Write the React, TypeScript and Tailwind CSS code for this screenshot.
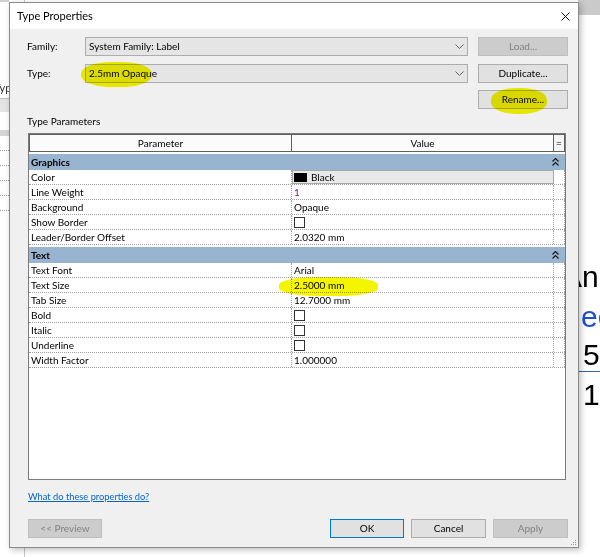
import React from 'react';

const font = { fontFamily: '"Segoe UI", Lato, "Liberation Sans", sans-serif' };

function Chevron() {
  return (
    <svg width="9" height="5" viewBox="0 0 9 5" className="text-[#606060]">
      <path d="M0.5 0.5 L4.5 4.5 L8.5 0.5" fill="none" stroke="currentColor" strokeWidth="1" />
    </svg>
  );
}

function Collapse() {
  return (
    <svg width="7" height="8" viewBox="0 0 7 8">
      <path d="M0.5 3.5 L3.5 0.5 L6.5 3.5 M0.5 7.5 L3.5 4.5 L6.5 7.5" fill="none" stroke="#1a1a1a" strokeWidth="1.2" />
    </svg>
  );
}

function Combo({ text }: { text: string }) {
  return (
    <div className="w-[383px] h-full bg-[#e5e5e5] border border-[#adadad] flex items-center justify-between pl-[3px] pr-[3px]">
      <span className="text-black">{text}</span>
      <Chevron />
    </div>
  );
}

function Btn({ label, disabled, primary, w }: { label: string; disabled?: boolean; primary?: boolean; w: string }) {
  return (
    <div
      className={`${w} h-full flex items-center justify-center border ${
        disabled
          ? 'bg-[#cccccc] border-[#bfbfbf] text-[#838383]'
          : primary
          ? 'bg-[#e1e1e1] border-[#0078d7] text-black'
          : 'bg-[#e1e1e1] border-[#adadad] text-black'
      }`}
    >
      {label}
    </div>
  );
}

function Check() {
  return <div className="w-[11px] h-[11px] border border-[#333333] bg-white" />;
}

type Row = { name: string; value: React.ReactNode; kind?: 'color' };

function DataRow({ row }: { row: Row }) {
  return (
    <div className="flex h-[15px] border-b border-dotted border-[#a0a0a0]">
      <div className="w-[263px] pl-[2px] border-r border-dotted border-[#a0a0a0] flex items-center">{row.name}</div>
      {row.kind === 'color' ? (
        <div className="w-[262px] bg-[#e9e9e9] border border-[#a8a8a8] flex items-center gap-[4px] pl-[1px]">
          <div className="w-[13px] h-[9px] bg-black" />
          <span>{row.value}</span>
        </div>
      ) : (
        <div className="w-[262px] pl-[2px] border-r border-dotted border-[#a0a0a0] flex items-center">{row.value}</div>
      )}
      <div className="w-[11px] border-r border-dotted border-[#a0a0a0]" />
    </div>
  );
}

function Group({ title, rows }: { title: string; rows: Row[] }) {
  return (
    <div className="mt-[2px]">
      <div className="h-[16px] bg-[#99b4d1] flex items-center justify-between pl-[2px] pr-[6px] font-bold">
        <span>{title}</span>
        <Collapse />
      </div>
      {rows.map((r) => (
        <DataRow key={r.name} row={r} />
      ))}
    </div>
  );
}

const graphics: Row[] = [
  { name: 'Color', value: 'Black', kind: 'color' },
  { name: 'Line Weight', value: <span className="text-[#6b1d6b]">1</span> },
  { name: 'Background', value: 'Opaque' },
  { name: 'Show Border', value: <Check /> },
  { name: 'Leader/Border Offset', value: '2.0320 mm' },
];

const text: Row[] = [
  { name: 'Text Font', value: 'Arial' },
  { name: 'Text Size', value: '2.5000 mm' },
  { name: 'Tab Size', value: '12.7000 mm' },
  { name: 'Bold', value: <Check /> },
  { name: 'Italic', value: <Check /> },
  { name: 'Underline', value: <Check /> },
  { name: 'Width Factor', value: '1.000000' },
];

export default function App() {
  return (
    <div className="relative w-[600px] h-[557px] overflow-hidden bg-white text-[10px] text-black" style={font}>
      {/* window behind the dialog */}
      <div className="flex h-full">
        <div className="w-[9px] flex flex-col overflow-hidden">
          <div className="h-[2px] bg-[#d0d0d0]" />
          <div className="h-[80px]" />
          <div className="h-[12px] leading-[12px] text-[11px] -ml-[6px] text-[#333] whitespace-nowrap">Typ</div>
          <div className="h-[4px]" />
          <div className="h-[14px] bg-[#e3e3e3] border-t border-[#bcbcbc]" />
          <div className="h-[18px]" />
          <div className="h-[6px] bg-[#d6d6d6]" />
          {[0, 1, 2, 3, 4].map((i) => (
            <div key={i} className="h-[15px] border-b border-dotted border-[#9a9a9a]" />
          ))}
        </div>
        <div className="flex-1">
          <div className="ml-[15px] h-full border-l border-[#c8c8c8]" />
        </div>
        <div className="w-[22px] flex flex-col text-[30px] leading-none" style={{ fontFamily: '"Liberation Sans", Arial, sans-serif' }}>
          <div className="h-[15px] bg-[#cacaca]" />
          <div className="h-[247px]" />
          <div className="-ml-[16px] whitespace-nowrap">An</div>
          <div className="mt-[10px] pl-[3px] text-[#1f4fd1] whitespace-nowrap">ec</div>
          <div className="mt-[8px] pl-[5px] border-b border-[#3a5fb8] pb-[1px]">5</div>
          <div className="mt-[8px] pl-[5px]">1</div>
        </div>
      </div>

      {/* dialog */}
      <div className="absolute left-[9px] top-[2px] w-[570px] h-[546px] border border-[#8a8a8a] bg-[#f0f0f0] shadow-[2px_2px_6px_rgba(0,0,0,0.25)] flex flex-col">
        <div className="h-[26px] bg-white flex items-center justify-between pl-[7px] pr-[8px] text-[11px]">
          <span>Type Properties</span>
          <svg width="9" height="9" viewBox="0 0 9 9">
            <path d="M0.5 0.5 L8.5 8.5 M8.5 0.5 L0.5 8.5" stroke="#111" strokeWidth="1" />
          </svg>
        </div>

        <div className="flex-1 flex flex-col pl-[17px] pr-[10px] pt-[8px]">
          <div className="flex items-center h-[19px]">
            <div className="w-[58px]">Family:</div>
            <Combo text="System Family: Label" />
            <div className="ml-[10px] h-full">
              <Btn label="Load..." disabled w="w-[90px]" />
            </div>
          </div>
          <div className="flex items-center h-[19px] mt-[8px]">
            <div className="w-[58px]">Type:</div>
            <Combo text="2.5mm Opaque" />
            <div className="ml-[10px] h-full">
              <Btn label="Duplicate..." w="w-[90px]" />
            </div>
          </div>
          <div className="flex justify-end h-[19px] mt-[7px]">
            <Btn label="Rename..." w="w-[90px]" />
          </div>

          <div className="mt-[5px] h-[14px] leading-[14px]">Type Parameters</div>

          <div className="mt-[5px] ml-[1px] w-[538px] h-[347px] border border-[#7a7a7a] bg-white flex flex-col">
            <div className="flex h-[18px] bg-[#fbfbfb]">
              <div className="w-[263px] border border-[#5f5f5f] flex items-center justify-center">Parameter</div>
              <div className="w-[262px] border border-l-0 border-[#5f5f5f] flex items-center justify-center">Value</div>
              <div className="w-[11px] border border-l-0 border-[#5f5f5f] flex items-center justify-center bg-[#f4f4f4]">=</div>
            </div>
            <Group title="Graphics" rows={graphics} />
            <Group title="Text" rows={text} />
          </div>

          <div className="mt-[10px] h-[14px] leading-[14px] pl-[1px] text-[9.3px]">
            <span className="text-[#0066cc] underline">What do these properties do?</span>
          </div>

          <div className="mt-[15px] h-[19px] flex pl-[1px]">
            <Btn label="<< Preview" disabled w="w-[74px]" />
            <div className="flex-1" />
            <div className="flex gap-[7px] h-full">
              <Btn label="OK" primary w="w-[74px]" />
              <Btn label="Cancel" w="w-[75px]" />
              <Btn label="Apply" disabled w="w-[75px]" />
            </div>
          </div>
        </div>

        {/* resize grip */}
        <svg className="absolute right-[1px] bottom-[1px]" width="7" height="7" viewBox="0 0 7 7">
          <rect x="5" y="1" width="1" height="1" fill="#999" />
          <rect x="3" y="3" width="1" height="1" fill="#999" />
          <rect x="5" y="3" width="1" height="1" fill="#999" />
          <rect x="1" y="5" width="1" height="1" fill="#999" />
          <rect x="3" y="5" width="1" height="1" fill="#999" />
          <rect x="5" y="5" width="1" height="1" fill="#999" />
        </svg>

        {/* highlighter marks */}
        <div className="absolute left-[71px] top-[59px] w-[71px] h-[25px] bg-[#f5f500] rounded-[45%] mix-blend-multiply" />
        <div className="absolute left-[481px] top-[85px] w-[56px] h-[26px] bg-[#f5f500] rounded-[45%] mix-blend-multiply" />
        <div className="absolute left-[269px] top-[274px] w-[99px] h-[19px] bg-[#f5f500] rounded-[40%] mix-blend-multiply" />
      </div>
    </div>
  );
}
